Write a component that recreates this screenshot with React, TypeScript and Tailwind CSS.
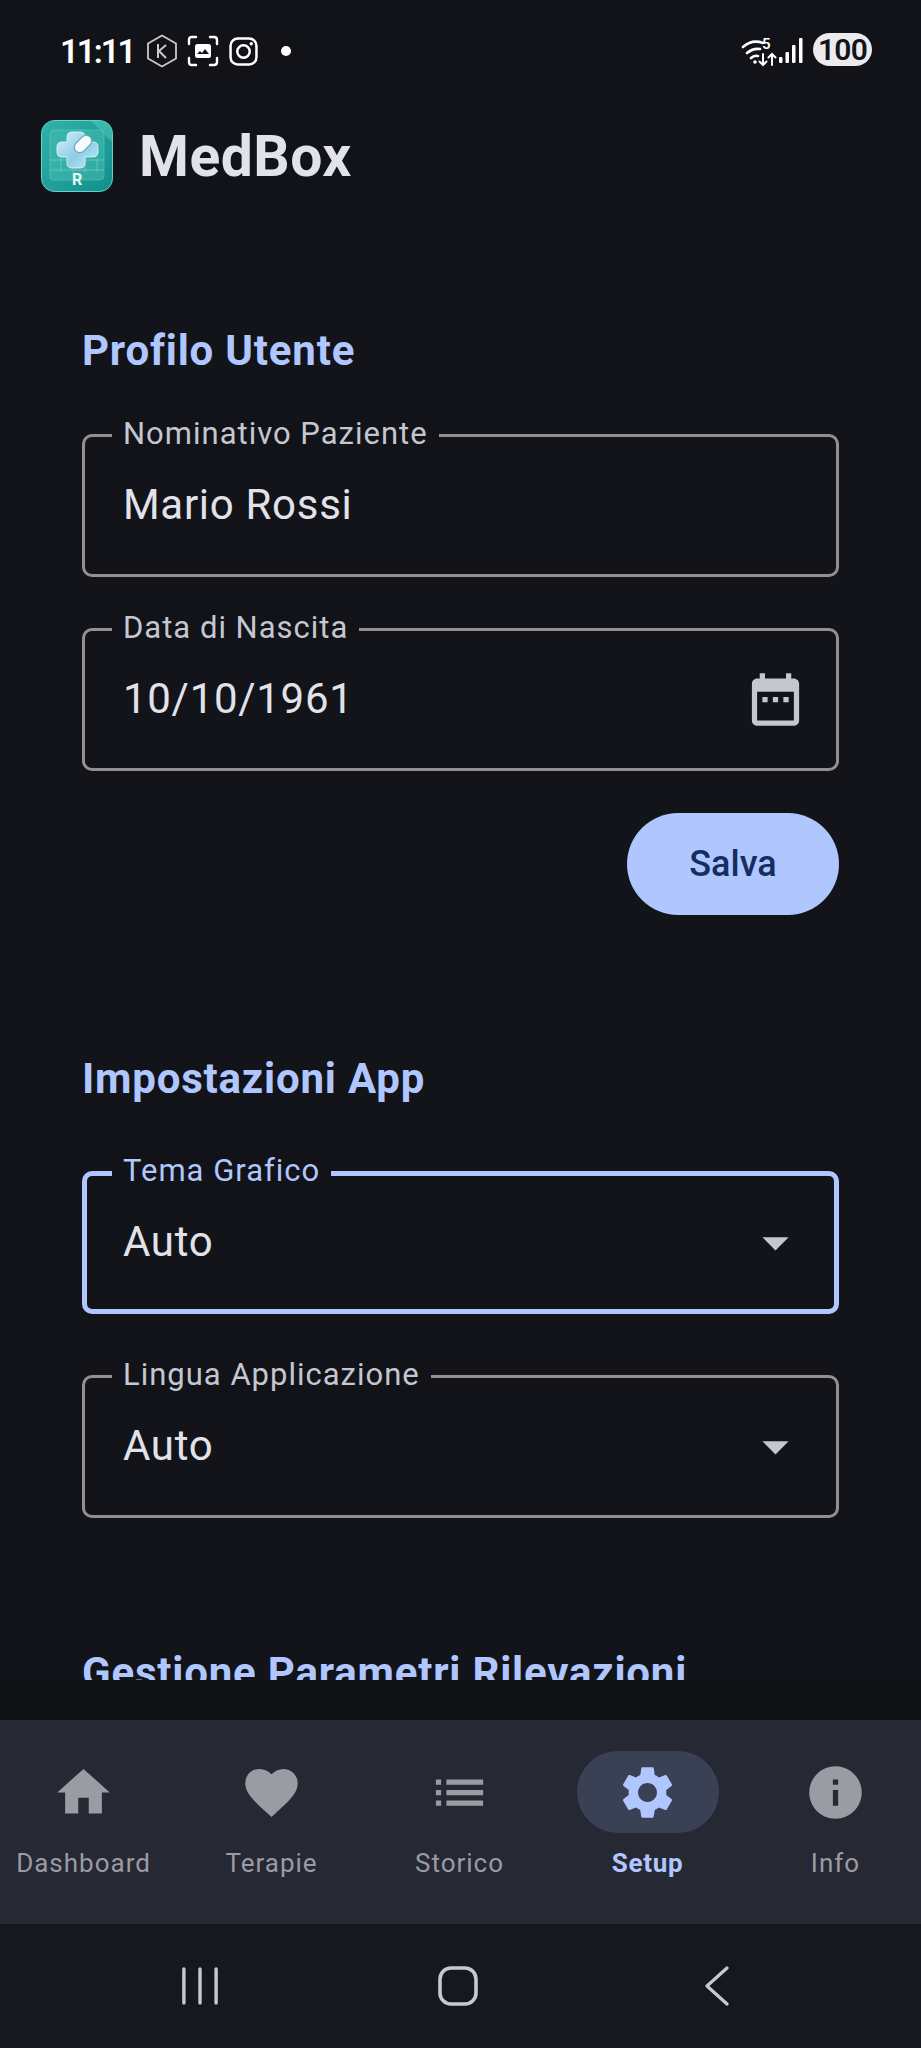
import React from 'react';

const HOME = 'M10 20v-6h4v6h5v-8h3L12 3 2 12h3v8z';
const HEART =
  'M12 21.35l-1.45-1.32C5.4 15.36 2 12.28 2 8.5 2 5.42 4.42 3 7.5 3c1.74 0 3.41.81 4.5 2.09C13.09 3.81 14.76 3 16.5 3 19.58 3 22 5.42 22 8.5c0 3.78-3.4 6.86-8.55 11.54L12 21.35z';
const LIST = 'M3 13h2v-2H3v2zm0 4h2v-2H3v2zm0-8h2V7H3v2zm4 4h14v-2H7v2zm0 4h14v-2H7v2zM7 7v2h14V7H7z';
const GEAR =
  'M19.14 12.94c.04-.3.06-.61.06-.94 0-.32-.02-.64-.07-.94l2.03-1.58c.18-.14.23-.41.12-.61l-1.92-3.32c-.12-.22-.37-.29-.59-.22l-2.39.96c-.5-.38-1.03-.7-1.62-.94l-.36-2.54c-.04-.24-.24-.41-.48-.41h-3.84c-.24 0-.43.17-.47.41l-.36 2.54c-.59.24-1.13.57-1.62.94l-2.39-.96c-.22-.08-.47 0-.59.22L2.74 8.87c-.12.21-.08.47.12.61l2.03 1.58c-.05.3-.09.63-.09.94s.02.64.07.94l-2.03 1.58c-.18.14-.23.41-.12.61l1.92 3.32c.12.22.37.29.59.22l2.39-.96c.5.38 1.03.7 1.62.94l.36 2.54c.05.24.24.41.48.41h3.84c.24 0 .44-.17.47-.41l.36-2.54c.59-.24 1.13-.56 1.62-.94l2.39.96c.22.08.47 0 .59-.22l1.92-3.32c.12-.22.07-.47-.12-.61l-2.01-1.58zM12 15.6c-1.98 0-3.6-1.62-3.6-3.6s1.62-3.6 3.6-3.6 3.6 1.62 3.6 3.6-1.62 3.6-3.6 3.6z';
const INFO =
  'M12 2C6.48 2 2 6.48 2 12s4.48 10 10 10 10-4.48 10-10S17.52 2 12 2zm1 15h-2v-6h2v6zm0-8h-2V7h2v2z';
const CALENDAR =
  'M9 11H7v2h2v-2zm4 0h-2v2h2v-2zm4 0h-2v2h2v-2zm2-7h-1V2h-2v2H8V2H6v2H5c-1.11 0-1.99.9-1.99 2L3 20c0 1.1.89 2 2 2h14c1.1 0 2-.9 2-2V6c0-1.1-.9-2-2-2zm0 16H5V9h14v11z';

function Icon({ d, className }: { d: string; className?: string }) {
  return (
    <svg viewBox="0 0 24 24" fill="currentColor" className={className}>
      <path d={d} />
    </svg>
  );
}

function StatusBar() {
  return (
    <div className="h-[102px] shrink-0 flex items-center justify-between pl-[60px] pr-[49px] text-white">
      <div className="flex items-center">
        <span className="text-[33px] font-semibold leading-none tracking-[-2px] w-[86px]">11:11</span>
        {/* hexagon k */}
        <svg viewBox="0 0 32 34" className="w-[32px] h-[34px] text-[#c9c9cc]" fill="none" stroke="currentColor" strokeWidth="1.8">
          <path d="M16 1.5 30 9.5v15l-14 8-14-8v-15z" />
          <path d="M12 10v14M20 11l-7 6 7 7" strokeWidth="2" />
        </svg>
        {/* capture */}
        <svg viewBox="0 0 32 32" className="w-[32px] h-[32px] ml-[9px]" fill="none" stroke="currentColor" strokeWidth="2.4" strokeLinecap="round">
          <path d="M2 9V5q0-3 3-3h4M23 2h4q3 0 3 3v4M30 23v4q0 3-3 3h-4M9 30H5q-3 0-3-3v-4" />
          <rect x="8" y="9" width="16" height="14" rx="2.5" fill="currentColor" stroke="none" />
          <path d="M10 19l3-3 2 2 3-4 4 5z" fill="#111318" stroke="none" />
        </svg>
        {/* instagram */}
        <svg viewBox="0 0 28 28" className="w-[29px] h-[29px] ml-[10px]" fill="none" stroke="currentColor" strokeWidth="2.4">
          <rect x="1.5" y="1.5" width="25" height="25" rx="7" />
          <circle cx="14" cy="14" r="6" />
          <circle cx="21.5" cy="6.5" r="1.6" fill="currentColor" stroke="none" />
        </svg>
        <div className="w-[10px] h-[10px] rounded-full bg-white ml-[23px]" />
      </div>
      <div className="flex items-center">
        {/* wifi with arrows */}
        <svg viewBox="0 0 36 28" className="w-[36px] h-[28px] mt-[4px] -ml-[4px]" fill="none" stroke="currentColor" strokeWidth="2.6" strokeLinecap="round">
          <path d="M2 8Q11 0 22 4M6 14Q12 9 19 10M10 19q3-3 7-2" />
          <circle cx="14" cy="23" r="1.8" fill="currentColor" stroke="none" />
          <path d="M22 15v11M18.5 22.5 22 26l3.5-3.5M31 26V15M27.5 18.5 31 15l3.5 3.5" strokeWidth="2" />
        </svg>
        <span className="-ml-[15px] -mt-[14px] w-[15px] text-[15px] font-semibold leading-none">5</span>
        {/* signal */}
        <svg viewBox="0 0 24 26" className="w-[24px] h-[26px] ml-[2px]" fill="currentColor">
          <rect x="0" y="19" width="3.5" height="6" rx="1" />
          <rect x="6.5" y="14" width="3.5" height="11" rx="1" />
          <rect x="13" y="7" width="3.5" height="18" rx="1" />
          <rect x="20" y="0" width="3.5" height="25" rx="1" />
        </svg>
        <div className="ml-[10px] -mt-[3px] w-[59px] h-[33px] rounded-full bg-[#ebebee] text-[#111318] flex items-center justify-center text-[30px] font-semibold leading-none tracking-[-0.8px]">
          100
        </div>
      </div>
    </div>
  );
}

function Logo() {
  return (
    <svg viewBox="0 0 72 72" className="w-[72px] h-[72px] shrink-0">
      <defs>
        <linearGradient id="bg" x1="0" y1="0" x2="1" y2="1">
          <stop offset="0" stopColor="#30b3ab" />
          <stop offset="1" stopColor="#0f8f8a" />
        </linearGradient>
        <linearGradient id="cross" x1="0" y1="0" x2="1" y2="1">
          <stop offset="0" stopColor="#d4eef8" />
          <stop offset="0.55" stopColor="#8fcde8" />
          <stop offset="1" stopColor="#c5e8f5" />
        </linearGradient>
      </defs>
      <rect x="0.5" y="0.5" width="71" height="71" rx="13" fill="url(#bg)" stroke="#6fd0c8" strokeWidth="1" />
      <path d="M50 1h9q12 0 12 12v9z" fill="#4cc4bb" opacity="0.6" />
      <rect x="9" y="10" width="54" height="50" rx="4" fill="#47bdb4" opacity="0.55" stroke="#7fd8d0" strokeWidth="0.8" />
      <path d="M9 40h54M9 50h54M20 38v14M32 38v14M44 38v14M56 38v14" stroke="#9fe0d8" strokeWidth="1" opacity="0.45" />
      <path
        d="M26 17q0-5 5-5h8q5 0 5 5v5h8q5 0 5 5v5q0 5-5 5h-8v6q0 5-5 5h-8q-5 0-5-5v-6h-5q-5 0-5-5v-5q0-5 5-5h5z"
        fill="url(#cross)"
        stroke="#e4f6fb"
        strokeWidth="0.8"
      />
      <rect x="32" y="18.5" width="20" height="11" rx="5.5" transform="rotate(-45 42 24)" fill="#f5fcfe" stroke="#6ea6bd" strokeWidth="1.2" />
      <text x="36" y="65" textAnchor="middle" fontFamily="Roboto" fontWeight="700" fontSize="16" fill="#eafaf8">R</text>
    </svg>
  );
}

function Field({
  label,
  value,
  focused,
  trailing,
  className,
}: {
  label: string;
  value: string;
  focused?: boolean;
  trailing?: React.ReactNode;
  className?: string;
}) {
  return (
    <div
      className={
        'relative h-[143px] rounded-[10px] flex items-center justify-between ' +
        (focused ? 'border-[5px] border-[#b0c6ff] pl-[36px] pr-[27px] ' : 'border-[3px] border-[#919094] pl-[38px] pr-[29px] ') +
        (className ?? '')
      }
    >
      <span
        className={
          'absolute px-[11px] bg-[#111318] text-[31px] leading-[40px] tracking-[1px] ' +
          (focused ? '-top-[25px] left-[25px] text-[#b0c6ff]' : '-top-[23px] left-[27px] text-[#c4c6d0]')
        }
      >
        {label}
      </span>
      <span className="pb-[2px] text-[42px] leading-none tracking-[0.7px] text-[#e2e2e9]">{value}</span>
      {trailing}
    </div>
  );
}

function NavItem({ d, label, active }: { d: string; label: string; active?: boolean }) {
  return (
    <div className="w-[167px] flex flex-col items-center">
      <div
        className={
          'w-[142px] h-[82px] rounded-full flex items-center justify-center ' +
          (active ? 'bg-[#3a4154] text-[#b0c6ff]' : 'text-[#9a9ba3]')
        }
      >
        <Icon d={d} className="w-[63px] h-[63px]" />
      </div>
      <span
        className={
          'mt-[10px] text-[26px] leading-[40px] ' +
          (active ? 'text-[#b0c6ff] font-bold tracking-[0.7px]' : 'text-[#9a9ba3] tracking-[1px]')
        }
      >
        {label}
      </span>
    </div>
  );
}

export default function App() {
  return (
    <div className="w-[921px] h-[2048px] overflow-hidden flex flex-col bg-[#111318] font-['Roboto',sans-serif]">
      <StatusBar />

      <header className="h-[108px] shrink-0 flex items-center gap-[26px] pl-[41px]">
        <Logo />
        <h1 className="text-[57px] font-bold leading-none tracking-[0.5px] text-[#e2e2e9]">MedBox</h1>
      </header>

      <main className="h-[1470px] shrink-0 overflow-hidden px-[42px] pt-[90px] flex flex-col gap-[65px]">
        <section className="shrink-0 rounded-[30px] bg-[#12141a] px-[40px] pt-[26px] pb-[51px]">
          <h2 className="text-[42px] font-bold leading-[50px] tracking-[0.8px] text-[#b0c6ff] mb-[58px]">Profilo Utente</h2>
          <Field label="Nominativo Paziente" value="Mario Rossi" />
          <Field
            label="Data di Nascita"
            value="10/10/1961"
            className="mt-[51px]"
            trailing={<Icon d={CALENDAR} className="w-[63px] h-[63px] text-[#c4c6d0]" />}
          />
          <div className="flex justify-end mt-[42px]">
            <button className="w-[212px] h-[102px] rounded-full bg-[#b0c6ff] text-[#152e60] text-[36px] font-medium">
              Salva
            </button>
          </div>
        </section>

        <section className="shrink-0 rounded-[30px] bg-[#12141a] px-[40px] pt-[23px] pb-[39px]">
          <h2 className="text-[42px] font-bold leading-[50px] tracking-[0.8px] text-[#b0c6ff] mb-[67px]">Impostazioni App</h2>
          <Field
            label="Tema Grafico"
            value="Auto"
            focused
            trailing={<Icon d="M7 10l5 5 5-5z" className="w-[63px] h-[63px] text-[#c4c6d0]" />}
          />
          <Field
            label="Lingua Applicazione"
            value="Auto"
            className="mt-[61px]"
            trailing={<Icon d="M7 10l5 5 5-5z" className="w-[63px] h-[63px] text-[#c4c6d0]" />}
          />
        </section>

        <section className="shrink-0 rounded-[30px] bg-[#12141a] px-[40px] pt-[26px] pb-[40px]">
          <h2 className="text-[42px] font-bold leading-[50px] tracking-[0.8px] text-[#b0c6ff]">Gestione Parametri Rilevazioni</h2>
        </section>
      </main>

      <div className="h-[40px] shrink-0 bg-[#0f1115]" />

      <nav className="h-[204px] shrink-0 bg-[#262833] flex justify-between pt-[31px] pr-[2px]">
        <NavItem d={HOME} label="Dashboard" />
        <NavItem d={HEART} label="Terapie" />
        <NavItem d={LIST} label="Storico" />
        <NavItem d={GEAR} label="Setup" active />
        <NavItem d={INFO} label="Info" />
      </nav>

      <div className="flex-1 bg-[#15181e] flex items-center pl-[182px] text-[#c9c9cc]">
        <svg viewBox="0 0 38 40" className="w-[36px] h-[40px]" fill="none" stroke="currentColor" strokeWidth="3.6" strokeLinecap="round">
          <path d="M2 2v36M19 2v36M36 2v36" />
        </svg>
        <svg viewBox="0 0 40 40" className="w-[40px] h-[40px] ml-[220px]" fill="none" stroke="currentColor" strokeWidth="3.6">
          <rect x="2" y="2" width="36" height="36" rx="11" />
        </svg>
        <svg viewBox="0 0 24 40" className="w-[24px] h-[40px] ml-[227px]" fill="none" stroke="currentColor" strokeWidth="3.2" strokeLinecap="round" strokeLinejoin="round">
          <path d="M22 2 2 20l20 18" />
        </svg>
      </div>
    </div>
  );
}
